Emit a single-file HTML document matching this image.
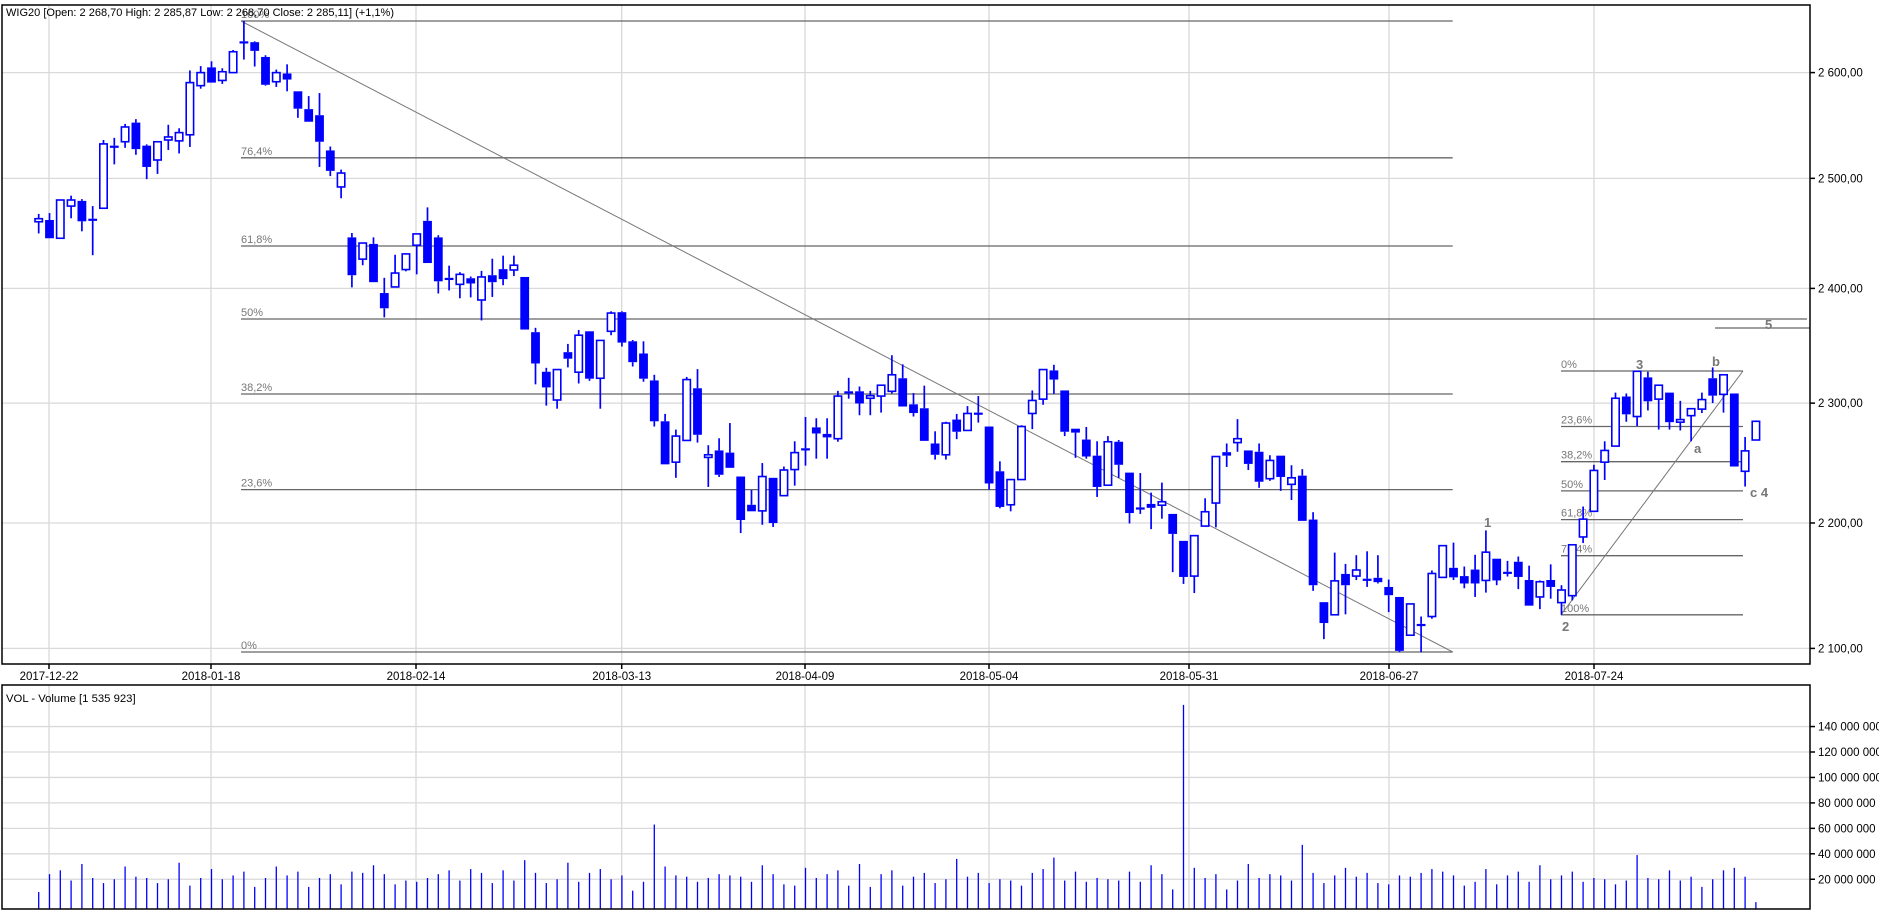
<!DOCTYPE html>
<html><head><meta charset="utf-8">
<style>
html,body{margin:0;padding:0;background:#fff;}
svg{display:block;font-family:"Liberation Sans",sans-serif;}
</style></head>
<body>
<svg id="s" width="1879" height="912" viewBox="0 0 1879 912" xmlns="http://www.w3.org/2000/svg">
<rect width="1879" height="912" fill="#fff"/>
<g id="grid"></g>
<g id="fib" stroke="#666" stroke-width="1.3" fill="none"></g>
<g id="fibt" fill="#777" font-size="11"></g>
<g id="candles"></g>
<g id="vol" stroke="#0000ff" stroke-width="1.3"></g>
<g id="frame" fill="none" stroke="#000" stroke-width="1.5"></g>
<g id="labels" fill="#000" font-size="11.5"></g>
<text x="6" y="16" font-size="11.3" fill="#000" textLength="388" lengthAdjust="spacingAndGlyphs">WIG20 [Open: 2 268,70  High: 2 285,87  Low: 2 268,70  Close: 2 285,11] (+1,1%)</text>
<text x="6" y="702" font-size="11.3" fill="#000">VOL - Volume [1 535 923]</text>
</svg>
<script>
var NS="http://www.w3.org/2000/svg";
function el(p,t,a,txt){var e=document.createElementNS(NS,t);for(var k in a)e.setAttribute(k,a[k]);if(txt!=null)e.textContent=txt;document.getElementById(p).appendChild(e);return e;}
var L=2,R=1810,T=5,B=664,VT=685,VB=909;
function py(p){return 72.6+2696*Math.log(2600/p);}
// grid
var vx=[49,211,416,621.7,805,989,1189,1389,1594];
var dates=["2017-12-22","2018-01-18","2018-02-14","2018-03-13","2018-04-09","2018-05-04","2018-05-31","2018-06-27","2018-07-24"];
vx.forEach(function(x,i){
 el("grid","line",{x1:x,y1:T,x2:x,y2:B,stroke:"#d9d9d9","stroke-width":1.3});
 el("grid","line",{x1:x,y1:VT,x2:x,y2:VB,stroke:"#d9d9d9","stroke-width":1.3});
 el("frame","line",{x1:x,y1:B,x2:x,y2:B+5});
 el("labels","text",{x:x,y:680,"text-anchor":"middle"},dates[i]);
});
[2600,2500,2400,2300,2200,2100].forEach(function(p){
 var y=py(p);
 el("grid","line",{x1:L,y1:y,x2:R,y2:y,stroke:"#d9d9d9","stroke-width":1.3});
 el("frame","line",{x1:R,y1:y,x2:R+5,y2:y});
 el("labels","text",{x:1818,y:y+4},(p+"").charAt(0)+" "+(p+"").slice(1)+",00");
});
var v0=904.7,vs=1.2725;
[20,40,60,80,100,120,140].forEach(function(m){
 var y=v0-m*vs;
 el("grid","line",{x1:L,y1:y,x2:R,y2:y,stroke:"#d9d9d9","stroke-width":1.3});
 el("frame","line",{x1:R,y1:y,x2:R+5,y2:y});
 el("labels","text",{x:1818,y:y+4},m+" 000 000");
});
// fib main
var fx1=241,fx2=1452.7;
[[21,"100%"],[157.8,"76,4%"],[246,"61,8%"],[319,"50%"],[394,"38,2%"],[489.6,"23,6%"],[652,"0%"]].forEach(function(f){
 el("fib","line",{x1:fx1,y1:f[0],x2:(f[1]=="50%"?1807:fx2),y2:f[0]});
 el("fibt","text",{x:fx1,y:f[0]-3},f[1]);
});
el("fib","line",{x1:fx1,y1:21,x2:fx2,y2:652,"stroke-width":1,stroke:"#777"});
el("fib","line",{x1:1715,y1:328,x2:1810,y2:328});
// fib right
var gx1=1561,gx2=1743;
[[371,"0%"],[426.5,"23,6%"],[461.7,"38,2%"],[490.9,"50%"],[519.6,"61,8%"],[555.7,"76,4%"],[614.8,"100%"]].forEach(function(f){
 el("fib","line",{x1:gx1,y1:f[0],x2:gx2,y2:f[0]});
 el("fibt","text",{x:gx1,y:f[0]-3},f[1]);
});
el("fib","line",{x1:gx1,y1:614.8,x2:gx2,y2:371,"stroke-width":1,stroke:"#777"});
[[1484,527,"1"],[1562,631,"2"],[1636,369,"3"],[1712,366,"b"],[1694,453,"a"],[1750,497,"c 4"],[1765,329,"5"]].forEach(function(w){
 el("fibt","text",{x:w[0],y:w[1],"font-size":"13","font-weight":"bold",fill:"#777"},w[2]);
});
// candles [top,bottom,high,low,filled] in zoom-y (÷2.3)
var C=[[503,510,492,537,0],[506,548,490,548,1],[460,548,460,548,0],[460,474,450,502,0],[462,509,458,532,1],[503,505,474,587,1],[331,479,322,479,0],[335,338,317,378,1],[292,326,285,340,0],[282,343,274,356,1],
[335,384,332,412,1],[326,368,326,400,0],[315,322,287,345,0],[305,324,295,353,0],[190,310,162,338,0],[167,197,152,204,0],[155,190,141,190,1],[165,185,157,193,0],[119,167,115,167,0],[95,98,48,137,1],
[97,117,95,153,1],[131,195,127,197,1],[167,188,160,200,0],[169,183,148,210,1],[210,250,210,271,1],[251,280,221,280,1],[265,326,214,384,1],[346,393,337,405,1],[398,430,390,456,0],[546,633,536,661,1],
[559,596,559,610,0],[561,649,546,649,1],[674,709,639,730,1],[628,660,586,660,0],[584,620,584,624,0],[538,564,538,631,0],[508,605,477,605,1],[546,647,541,675,1],[639,642,611,668,1],[631,654,626,686,0],
[640,652,636,684,1],[637,690,623,737,0],[633,649,595,683,1],[619,642,588,656,1],[610,621,588,635,0],[637,758,637,758,1],[764,836,754,884,1],[855,891,846,933,1],[850,920,850,940,0],[810,825,791,845,1],
[771,856,759,882,0],[762,871,762,876,1],[783,870,783,940,0],[720,762,716,771,0],[718,788,716,797,1],[785,833,782,843,1],[813,871,785,878,1],[875,969,862,981,1],[969,1068,952,1068,1],[1003,1063,988,1099,0],
[873,1013,867,1013,0],[893,1000,849,1018,1],[1046,1052,1024,1120,0],[1036,1092,1008,1097,1],[1041,1076,973,1076,1],[1096,1196,1096,1226,1],[1161,1176,1127,1176,1],[1096,1175,1065,1207,0],[1099,1203,1099,1212,1],[1081,1140,1073,1140,0],
[1041,1080,1015,1117,0],[1031,1034,959,1071,1],[983,997,962,1055,1],[998,1006,962,1055,1],[911,1009,899,1016,0],[900,903,869,917,1],[900,928,889,955,1],[910,916,899,955,0],[886,911,886,949,0],[862,900,817,905,0],
[870,935,838,935,1],[930,950,904,958,1],[939,1014,887,1014,1],[1020,1046,992,1057,1],[973,1046,970,1057,0],[965,993,952,1010,1],[951,990,934,990,0],[949,952,911,972,1],[981,1112,981,1126,1],[1084,1166,1061,1169,1],
[1103,1161,1103,1176,0],[981,1103,978,1103,0],[921,951,898,987,0],[850,918,850,931,0],[852,873,839,906,1],[898,993,898,1003,1],[986,995,986,1053,1],[1011,1050,982,1055,1],[1048,1120,1015,1143,1],[1016,1116,1003,1116,0],
[1016,1069,1012,1099,1],[1087,1180,1087,1204,1],[1167,1170,1088,1182,1],[1159,1168,1133,1217,1],[1154,1162,1110,1193,0],[1182,1228,1182,1316,1],[1244,1327,1244,1343,1],[1232,1325,1232,1364,0],[1177,1210,1146,1210,0],[1050,1157,1050,1213,0],
[1040,1048,1020,1074,1],[1009,1018,964,1039,0],[1036,1067,1036,1081,1],[1039,1108,1020,1122,1],[1059,1101,1047,1106,0],[1048,1097,1048,1129,1],[1099,1114,1070,1150,0],[1094,1198,1079,1198,1],[1195,1346,1178,1359,1],[1385,1433,1385,1470,1],
[1336,1414,1271,1414,0],[1320,1346,1297,1413,1],[1311,1325,1277,1334,0],[1331,1334,1268,1350,1],[1329,1339,1277,1342,1],[1350,1369,1333,1408,1],[1373,1497,1373,1500,1],[1389,1461,1389,1461,0],[1435,1438,1418,1500,1],[1319,1418,1312,1423,0],
[1255,1328,1255,1328,0],[1306,1328,1248,1334,1],[1325,1342,1303,1353,1],[1310,1342,1276,1373,1],[1270,1335,1220,1363,0],[1285,1335,1285,1346,1],[1315,1318,1290,1326,1],[1292,1327,1280,1355,1],[1334,1393,1301,1393,1],[1338,1373,1335,1401,0],
[1334,1350,1298,1377,1],[1357,1386,1346,1414,0],[1253,1370,1253,1381,0],[1194,1235,1165,1249,0],[1082,1176,1069,1176,0],[1036,1063,1015,1104,0],[916,1026,903,1026,0],[912,953,905,970,1],[854,958,854,980,0],[868,923,855,944,1],
[886,918,886,988,0],[903,971,903,988,1],[965,971,922,990,0],[940,956,940,1015,0],[919,941,903,950,0],[870,910,845,927,1],[862,907,862,949,0],[905,1073,905,1073,1],[1037,1084,1005,1119,0],[969,1012,967,1012,0]];
var k=2.3;
C.forEach(function(c,i){
 var x=38.7+i*10.80;
 var t=c[0]/k,b=c[1]/k,h=c[2]/k,l=c[3]/k;
 el("candles","line",{x1:x,y1:h,x2:x,y2:t,stroke:"#0000ff","stroke-width":1.7});
 el("candles","line",{x1:x,y1:b,x2:x,y2:l,stroke:"#0000ff","stroke-width":1.7});
 if(c[4]){
  var hh=Math.max(b-t,2.2);
  el("candles","rect",{x:x-4.4,y:t,width:8.8,height:hh,fill:"#0000ff"});
 } else {
  var hh2=Math.max(b-t,2.5);
  el("candles","rect",{x:x-3.7,y:t,width:7.4,height:hh2,fill:"#fff",stroke:"#0000ff","stroke-width":1.6});
 }
 // volume
 var m=14+((i*37)%11)+((i*13)%7)-(i%5==0?4:0);
 if(i%9==4)m+=10;
 if(i==57)m=63; if(i==106)m=157; if(i==117)m=47; if(i==45)m=35; if(i==94)m=37; if(i==159)m=2;
 el("vol","line",{x1:x,y1:v0-m*vs,x2:x,y2:VB});
});
// frames
el("frame","rect",{x:L,y:T,width:R-L,height:B-T});
el("frame","rect",{x:L,y:VT,width:R-L,height:VB-VT});
</script>
</body></html>
